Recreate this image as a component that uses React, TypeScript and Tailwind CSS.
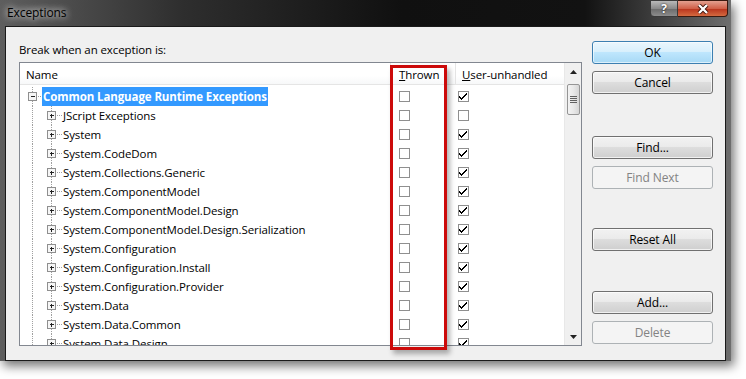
import React from "react";

const FONT = { fontFamily: '"Open Sans", "Noto Sans", Arial, sans-serif', letterSpacing: "-0.1px" };

const rows: { name: string; thrown: boolean; user: boolean; root?: boolean }[] = [
  { name: "Common Language Runtime Exceptions", thrown: false, user: true, root: true },
  { name: "JScript Exceptions", thrown: false, user: false },
  { name: "System", thrown: false, user: true },
  { name: "System.CodeDom", thrown: false, user: true },
  { name: "System.Collections.Generic", thrown: false, user: true },
  { name: "System.ComponentModel", thrown: false, user: true },
  { name: "System.ComponentModel.Design", thrown: false, user: true },
  { name: "System.ComponentModel.Design.Serialization", thrown: false, user: true },
  { name: "System.Configuration", thrown: false, user: true },
  { name: "System.Configuration.Install", thrown: false, user: true },
  { name: "System.Configuration.Provider", thrown: false, user: true },
  { name: "System.Data", thrown: false, user: true },
  { name: "System.Data.Common", thrown: false, user: true },
  { name: "System.Data.Design", thrown: false, user: true },
];

function TreeGlyph({ root }: { root?: boolean }) {
  return (
    <svg width="44" height="19" viewBox="0 0 44 19" className="shrink-0" shapeRendering="crispEdges">
      <line x1="12.5" y1="0" x2="12.5" y2={root ? 5 : 19} stroke="#a0a0a0" strokeDasharray="1 1" />
      {root && <line x1="12.5" y1="14" x2="12.5" y2="19" stroke="#a0a0a0" strokeDasharray="1 1" />}
      {root ? (
        <>
          <rect x="8.5" y="5.5" width="8" height="8" fill="#f6f6f6" stroke="#8f8f8f" />
          <line x1="10.5" y1="9.5" x2="14.5" y2="9.5" stroke="#222" />
          <line x1="18" y1="9.5" x2="22" y2="9.5" stroke="#a0a0a0" strokeDasharray="1 1" />
        </>
      ) : (
        <>
          <line x1="31.5" y1="0" x2="31.5" y2="5" stroke="#a0a0a0" strokeDasharray="1 1" />
          <line x1="31.5" y1="14" x2="31.5" y2="19" stroke="#a0a0a0" strokeDasharray="1 1" />
          <rect x="27.5" y="5.5" width="8" height="8" fill="#f6f6f6" stroke="#8f8f8f" />
          <line x1="29.5" y1="9.5" x2="33.5" y2="9.5" stroke="#222" />
          <line x1="31.5" y1="7.5" x2="31.5" y2="11.5" stroke="#222" />
          <line x1="37" y1="9.5" x2="42" y2="9.5" stroke="#a0a0a0" strokeDasharray="1 1" />
        </>
      )}
    </svg>
  );
}

function Check({ checked }: { checked: boolean }) {
  return (
    <div className="w-[11px] h-[11px] border border-[#8f8f8f] bg-white flex items-center justify-center">
      {checked && (
        <svg width="9" height="9" viewBox="0 0 9 9" shapeRendering="crispEdges">
          <path d="M7 1h1v2h-1v1h-1v1h-1v1h-1v1h-1v1h-1v-1h-1v-1h-1v-2h1v1h1v1h1v-1h1v-1h1v-1h1z" fill="#000" />
        </svg>
      )}
    </div>
  );
}

function Btn({ label, primary, disabled }: { label: string; primary?: boolean; disabled?: boolean }) {
  const cls = primary
    ? "border-[#3c7fb1] bg-[linear-gradient(#eaf6fd_0%,#d9f0fc_45%,#bee6fd_50%,#a7d9f5_100%)] text-black shadow-[inset_0_0_0_1px_rgba(255,255,255,0.6)]"
    : disabled
    ? "border-[#adb2b5] bg-[#f4f4f4] text-[#838383]"
    : "border-[#707070] bg-[linear-gradient(#f2f2f2_0%,#ebebeb_45%,#dddddd_50%,#cfcfcf_100%)] text-black shadow-[inset_0_0_0_1px_rgba(255,255,255,0.7)]";
  return (
    <div className={`w-[121px] h-[23px] rounded-[3px] border flex items-center justify-center text-[12px] ${cls}`}>
      {label}
    </div>
  );
}

export default function App() {
  return (
    <div className="relative w-[746px] h-[379px] bg-white overflow-hidden text-[11.5px]" style={FONT}>
      {/* window */}
      <div className="w-[731px] h-[361px] flex flex-col bg-[linear-gradient(to_right,#5e5e5e_0%,#2e2e2e_25%,#101010_55%,#121212_80%,#6e6e6e_100%)] shadow-[3px_5px_10px_rgba(0,0,0,0.55)]">
        {/* title bar */}
        <div className="h-[26px] flex items-start shrink-0">
          <div className="pl-[7px] pt-[4px] text-[12px] text-black [text-shadow:0_0_6px_rgba(255,255,255,0.9),0_0_10px_rgba(255,255,255,0.6)]">
            Exceptions
          </div>
          <div className="ml-auto mr-[3px] flex h-[17px]">
            <div className="w-[28px] h-[17px] border border-[#3a3a3a] rounded-bl-[4px] bg-[linear-gradient(#b9b9b9_0%,#8a8a8a_50%,#6a6a6a_51%,#8c8c8c_100%)] flex items-center justify-center text-white font-bold text-[12px] leading-none [text-shadow:0_0_2px_#000]">
              ?
            </div>
            <div className="w-[50px] h-[17px] border border-[#3a1a10] border-l-0 rounded-br-[4px] bg-[linear-gradient(#e4a090_0%,#d06048_50%,#b8321c_51%,#d46a40_100%)] flex items-center justify-center">
              <svg width="12" height="10" viewBox="0 0 12 10">
                <path d="M2 1 L10 9 M10 1 L2 9" stroke="#3b1008" strokeWidth="4" />
                <path d="M2 1 L10 9 M10 1 L2 9" stroke="#fff" strokeWidth="2.4" />
              </svg>
            </div>
          </div>
        </div>
        {/* client */}
        <div className="flex-1 mx-[5px] border border-[#1a1a1a] bg-[#f0f0f0] flex">
          <div className="pl-[13px] pt-[14px] flex flex-col">
            <div className="h-[16px] leading-[16px] text-black pt-[1px]">Break when an exception is:</div>
            <div className="mt-[5px] w-[563px] h-[284px] border border-[#828790] bg-white flex">
              <div className="flex-1 flex flex-col overflow-hidden">
                <div className="h-[22px] flex shrink-0 border-b border-[#e5e5e5] bg-[linear-gradient(#ffffff_0%,#ffffff_60%,#f7f8f9_100%)]">
                  <div className="w-[371px] pl-[6px] pt-[2px] flex items-center border-r border-[#e5e5e5]">Name</div>
                  <div className="w-[65px] pl-[8px] pt-[2px] flex items-center border-r border-[#e5e5e5]">
                    <span><span className="underline">T</span>hrown</span>
                  </div>
                  <div className="flex-1 pl-[6px] pt-[2px] flex items-center">
                    <span><span className="underline">U</span>ser-unhandled</span>
                  </div>
                </div>
                <div className="pt-[2px] flex flex-col">
                  {rows.map((r, i) => (
                    <div key={i} className="h-[19px] flex items-center shrink-0">
                      <div className="w-[371px] flex items-center shrink-0">
                        {r.root ? (
                          <>
                            <TreeGlyph root />
                            <div className="-ml-[22px] pl-[1px] pr-[1px] pt-[1px] h-[19px] flex items-center bg-[#3399ff] text-white font-bold whitespace-nowrap">
                              {r.name}
                            </div>
                          </>
                        ) : (
                          <>
                            <TreeGlyph />
                            <div className="-ml-[1px] pt-[1px] whitespace-nowrap text-black">{r.name}</div>
                          </>
                        )}
                      </div>
                      <div className="w-[66px] pl-[8px] shrink-0">
                        <Check checked={r.thrown} />
                      </div>
                      <div className="pl-[1px]">
                        <Check checked={r.user} />
                      </div>
                    </div>
                  ))}
                </div>
              </div>
              {/* scrollbar */}
              <div className="w-[17px] h-full bg-[#f0f0f0] border-l border-[#e8e8e8] flex flex-col items-center shrink-0">
                <div className="h-[17px] flex items-center justify-center">
                  <svg width="7" height="4" viewBox="0 0 7 4"><path d="M3.5 0 L7 4 L0 4Z" fill="#222" /></svg>
                </div>
                <div className="mt-[4px] w-[13px] h-[31px] rounded-[2px] border border-[#959595] bg-[linear-gradient(to_right,#f3f3f3,#e8e8e8_50%,#d6d6d6)] flex flex-col items-center justify-center gap-[1px]">
                  <div className="w-[7px] h-[1px] bg-[#606060]" />
                  <div className="w-[7px] h-[1px] bg-[#606060]" />
                  <div className="w-[7px] h-[1px] bg-[#606060]" />
                  <div className="w-[7px] h-[1px] bg-[#606060]" />
                </div>
                <div className="flex-1" />
                <div className="h-[17px] flex items-center justify-center">
                  <svg width="7" height="4" viewBox="0 0 7 4"><path d="M0 0 L7 0 L3.5 4Z" fill="#222" /></svg>
                </div>
              </div>
            </div>
          </div>
          <div className="ml-[10px] pt-[14px] flex flex-col">
            <Btn label="OK" primary />
            <div className="mt-[7px]"><Btn label="Cancel" /></div>
            <div className="mt-[42px]"><Btn label="Find..." /></div>
            <div className="mt-[7px]"><Btn label="Find Next" disabled /></div>
            <div className="mt-[39px]"><Btn label="Reset All" /></div>
            <div className="mt-[40px]"><Btn label="Add..." /></div>
            <div className="mt-[7px]"><Btn label="Delete" disabled /></div>
          </div>
        </div>
      </div>
      {/* red highlight box */}
      <div className="absolute left-[390px] top-[65px] w-[57px] h-[285px] border-[3px] border-[#cc0a0a] shadow-[3px_4px_5px_rgba(0,0,0,0.3)]" />
    </div>
  );
}
